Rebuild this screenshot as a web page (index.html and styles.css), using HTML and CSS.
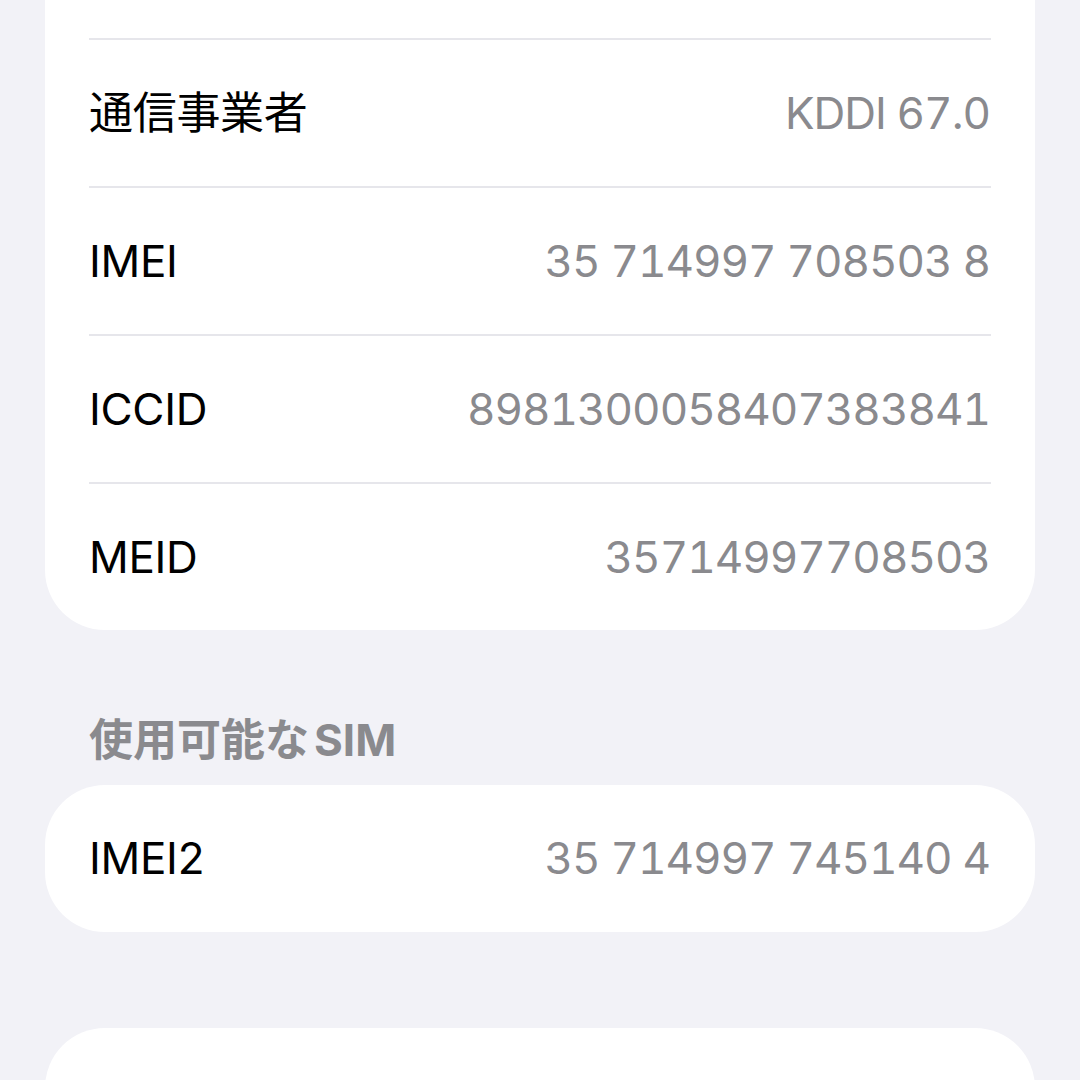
FILE: index.html
```html
<!DOCTYPE html>
<html lang="ja">
<head>
<meta charset="utf-8">
<title>情報</title>
<link rel="stylesheet" href="styles.css">
</head>
<body>
<div class="page">
  <section class="card card-first">
    <div class="stub"></div>
    <div class="sep"></div>
    <div class="row"><span class="label">通信事業者</span><span class="value">KDDI 67.0</span></div>
    <div class="sep"></div>
    <div class="row"><span class="label">IMEI</span><span class="value">35 714997 708503 8</span></div>
    <div class="sep"></div>
    <div class="row"><span class="label">ICCID</span><span class="value">8981300058407383841</span></div>
    <div class="sep"></div>
    <div class="row"><span class="label">MEID</span><span class="value">35714997708503</span></div>
  </section>

  <div class="section-header"><span>使用可能な<span class="latin">SIM</span></span></div>

  <section class="card">
    <div class="row row-single"><span class="label">IMEI2</span><span class="value">35 714997 745140 4</span></div>
  </section>

  <section class="card card-last"></section>
</div>
</body>
</html>
```

FILE: styles.css
```css
html, body {
  margin: 0;
  padding: 0;
  background: #f2f2f7;
  height: 1080px;
  overflow: hidden;
}

body {
  font-family: Inter, "Noto Sans CJK JP", sans-serif;
  -webkit-font-smoothing: antialiased;
}

.page {
  padding: 0 45px;
  display: flex;
  flex-direction: column;
}

.card {
  background: #ffffff;
  border-radius: 60px;
  padding: 0 44px;
}

.card-first {
  border-radius: 0 0 60px 60px;
}

.stub {
  height: 38px;
}

.sep {
  height: 2px;
  background: #e6e6eb;
}

.row {
  height: 146px;
  display: flex;
  align-items: center;
  justify-content: space-between;
  font-size: 44px;
  line-height: 1.2;
}

.row-single {
  height: 147px;
}

.label {
  color: #000000;
  letter-spacing: -0.3px;
}

.value {
  color: #8a8a8e;
  font-variant-numeric: tabular-nums;
  letter-spacing: -1px;
  margin-right: 1px;
}

.section-header {
  height: 155px;
  display: flex;
  align-items: flex-end;
  box-sizing: border-box;
  padding: 0 44px 19px;
  font-size: 44px;
  line-height: 52px;
  font-weight: 700;
  color: #8a8a8e;
}

.latin {
  margin-left: 5px;
}

.card-last {
  margin-top: 96px;
  height: 200px;
}
```
